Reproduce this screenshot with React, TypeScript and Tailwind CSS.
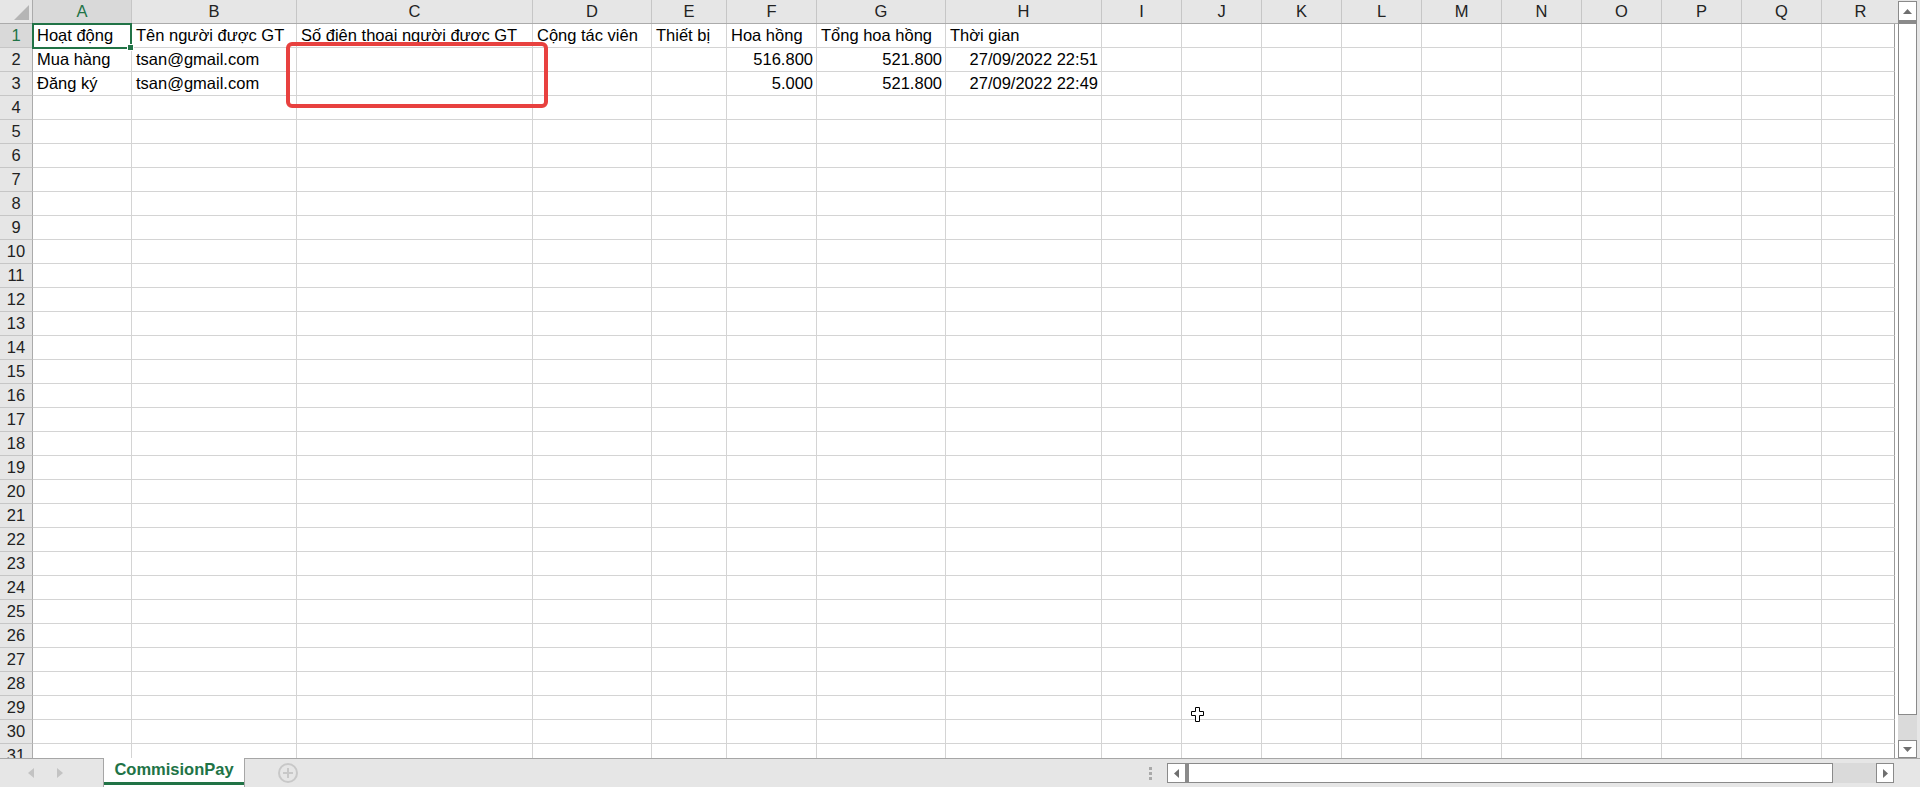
import type { ReactNode } from 'react';

type Col = { key: string; width: number };

const COLUMNS: Col[] = [
  { key: 'A', width: 99 },
  { key: 'B', width: 165 },
  { key: 'C', width: 236 },
  { key: 'D', width: 119 },
  { key: 'E', width: 75 },
  { key: 'F', width: 90 },
  { key: 'G', width: 129 },
  { key: 'H', width: 156 },
  ...['I', 'J', 'K', 'L', 'M', 'N', 'O', 'P', 'Q'].map(key => ({ key, width: 80 })),
  { key: 'R', width: 73 },
];

type Cell = { text: string; right?: boolean };

const DATA: Record<number, Record<string, Cell>> = {
  1: {
    A: { text: 'Hoạt động' },
    B: { text: 'Tên người được GT' },
    C: { text: 'Số điện thoại người được GT' },
    D: { text: 'Cộng tác viên' },
    E: { text: 'Thiết bị' },
    F: { text: 'Hoa hồng' },
    G: { text: 'Tổng hoa hồng' },
    H: { text: 'Thời gian' },
  },
  2: {
    A: { text: 'Mua hàng' },
    B: { text: 'tsan@gmail.com' },
    F: { text: '516.800', right: true },
    G: { text: '521.800', right: true },
    H: { text: '27/09/2022 22:51', right: true },
  },
  3: {
    A: { text: 'Đăng ký' },
    B: { text: 'tsan@gmail.com' },
    F: { text: '5.000', right: true },
    G: { text: '521.800', right: true },
    H: { text: '27/09/2022 22:49', right: true },
  },
};

const ROWS = Array.from({ length: 31 }, (_, i) => i + 1);

function ColumnHeader() {
  return (
    <div className="flex h-[24px] bg-[#e6e6e6] border-b border-[#ababab]">
      <div className="relative w-[33px] shrink-0 border-r border-[#ababab]">
        <svg className="absolute left-0 top-0" width="32" height="23" viewBox="0 0 32 23">
          <polygon points="29,5 29,20 14,20" fill="#b5b5b5" />
        </svg>
      </div>
      {COLUMNS.map((c, i) => (
        <div
          key={c.key}
          style={{ width: i === COLUMNS.length - 1 ? c.width + 4 : c.width }}
          className={
            'shrink-0 flex items-center justify-center text-[16.5px] leading-[23px] ' +
            (c.key === 'A'
              ? 'bg-[#d9d9d9] text-[#217346] border-r border-[#c6c6c6]'
              : i === COLUMNS.length - 1
                ? 'text-[#222]'
                : 'text-[#222] border-r border-[#c6c6c6]')
          }
        >
          {c.key}
        </div>
      ))}
    </div>
  );
}

function Row({ n }: { n: number }) {
  const cells = DATA[n] ?? {};
  return (
    <div className="flex h-[24px] shrink-0">
      <div
        className={
          'w-[33px] shrink-0 flex items-center justify-center leading-[23px] text-[16.5px] border-r border-b border-r-[#ababab] border-b-[#c6c6c6] ' +
          (n === 1 ? 'bg-[#d9d9d9] text-[#217346]' : 'bg-[#e6e6e6] text-[#222]')
        }
      >
        {n}
      </div>
      {COLUMNS.map((c, i) => {
        const cell = cells[c.key];
        return (
          <div
            key={c.key}
            style={{ width: c.width }}
            className={
              'shrink-0 flex items-center whitespace-nowrap leading-[23px] text-[16.5px] text-black border-b border-r border-[#d4d4d4] ' +
              (cell?.right ? 'justify-end pr-[3px]' : 'pl-[4px]') +
              (i === COLUMNS.length - 1 ? ' border-r-[#9a9a9a]' : '')
            }
          >
            {cell?.text}
          </div>
        );
      })}
      <div className="w-[3px] shrink-0 bg-white" />
    </div>
  );
}

function VerticalScroll() {
  return (
    <div className="w-[22px] h-full shrink-0 bg-[#e6e6e6] flex">
      <div className="w-[19px] h-full flex flex-col">
        <div className="h-[21px] shrink-0 pt-[1px]">
          <div className="h-[20px] bg-white border border-[#8a8a8a] flex items-center justify-center">
            <svg width="9" height="5" viewBox="0 0 9 5">
              <polygon points="4.5,0 9,5 0,5" fill="#6f6f6f" />
            </svg>
          </div>
        </div>
        <div className="flex-1 bg-white border-x border-b border-t-[3px] border-[#8a8a8a]" />
        <div className="h-[25px] shrink-0 bg-[#dadada]" />
        <div className="h-[18px] shrink-0 bg-white border border-[#8a8a8a] flex items-center justify-center">
          <svg width="9" height="5" viewBox="0 0 9 5">
            <polygon points="0,0 9,0 4.5,5" fill="#6f6f6f" />
          </svg>
        </div>
      </div>
    </div>
  );
}

function ArrowBox({ dir, className }: { dir: 'left' | 'right'; className?: string }) {
  return (
    <div className={'shrink-0 h-full bg-white flex items-center justify-center ' + (className ?? '')}>
      <svg width="5" height="9" viewBox="0 0 5 9">
        {dir === 'left' ? (
          <polygon points="5,0 5,9 0,4.5" fill="#6f6f6f" />
        ) : (
          <polygon points="0,0 5,4.5 0,9" fill="#6f6f6f" />
        )}
      </svg>
    </div>
  );
}

function SheetBar() {
  return (
    <div className="h-[29px] shrink-0 flex bg-[#e6e6e6] border-t border-[#a6a6a6]">
      <div className="w-[103px] shrink-0 flex items-center">
        <svg className="ml-[28px]" width="6" height="10" viewBox="0 0 6 10">
          <polygon points="6,0 6,10 0,5" fill="#c3c3c3" />
        </svg>
        <svg className="ml-[23px]" width="6" height="10" viewBox="0 0 6 10">
          <polygon points="0,0 6,5 0,10" fill="#c3c3c3" />
        </svg>
      </div>
      <div className="relative -mt-px w-[142px] shrink-0 bg-white border-x border-[#a6a6a6] flex items-center justify-center pb-[6px]">
        <span className="text-[16.5px] font-bold text-[#217346]">CommisionPay</span>
        <div className="absolute left-0 right-0 bottom-[2px] h-[3px] bg-[#217346]" />
      </div>
      <div className="ml-[33px] self-center w-[20px] h-[20px] rounded-full border-2 border-[#c8c8c8] flex items-center justify-center">
        <svg width="10" height="10" viewBox="0 0 10 10">
          <path d="M5 0v10M0 5h10" stroke="#c8c8c8" strokeWidth="2" />
        </svg>
      </div>
      <div className="flex-1" />
      <div className="flex flex-col justify-center gap-[2px] w-[3px]">
        <div className="h-[3px] bg-[#a9a9a9]" />
        <div className="h-[3px] bg-[#a9a9a9]" />
        <div className="h-[3px] bg-[#a9a9a9]" />
      </div>
      <div className="ml-[15px] w-[727px] h-[20px] self-center flex">
        <ArrowBox dir="left" className="w-[19px] border border-[#8a8a8a]" />
        <div className="flex-1 bg-white border-y border-r border-l-[3px] border-[#8a8a8a]" />
        <div className="w-[43px] shrink-0 bg-[#dadada]" />
        <ArrowBox dir="right" className="w-[18px] border border-[#8a8a8a]" />
      </div>
      <div className="w-[26px] shrink-0" />
    </div>
  );
}

function Overlay({ children }: { children: ReactNode }) {
  return <div className="pointer-events-none absolute inset-0">{children}</div>;
}

export default function App() {
  return (
    <div className="relative w-[1920px] h-[787px] overflow-hidden bg-white flex flex-col font-['Liberation_Sans',Arial,sans-serif]">
      <div className="flex h-[758px] shrink-0 overflow-hidden">
        <div className="w-[1898px] shrink-0 flex flex-col overflow-hidden">
          <ColumnHeader />
          {ROWS.map(n => (
            <Row key={n} n={n} />
          ))}
        </div>
        <VerticalScroll />
      </div>
      <SheetBar />

      <Overlay>
        {/* active cell A1 */}
        <div className="absolute left-[32px] top-[23px] w-[100px] h-[26px] border-2 border-[#217346]" />
        <div className="absolute left-[127px] top-[44px] w-[7px] h-[7px] bg-[#217346] border border-white" />

        {/* highlight around column C */}
        <div className="absolute left-[286px] top-[42px] w-[262px] h-[66px] border-4 border-[#e8413f] rounded-[6px]" />

        {/* mouse pointer */}
        <svg className="absolute left-[1191px] top-[707px]" width="13" height="15" viewBox="0 0 13 15">
          <path
            d="M4.5 0.5h4v4h4v4h-4v6h-4v-6h-4v-4h4z"
            fill="white"
            stroke="black"
            strokeWidth="1"
          />
        </svg>
      </Overlay>
    </div>
  );
}
